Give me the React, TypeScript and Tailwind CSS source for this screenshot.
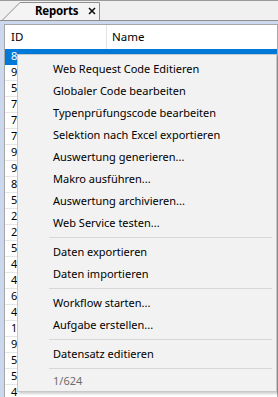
import React from "react";

const ids = ["8", "9", "5", "7", "7", "7", "9", "9", "8", "5", "2", "2", "5", "4", "4", "6", "4", "1", "9", "5", "5", "4"];

type MenuEntry = { label: string } | "sep";

const menu: MenuEntry[] = [
  { label: "Web Request Code Editieren" },
  { label: "Globaler Code bearbeiten" },
  { label: "Typenprüfungscode bearbeiten" },
  { label: "Selektion nach Excel exportieren" },
  { label: "Auswertung generieren..." },
  { label: "Makro ausführen..." },
  { label: "Auswertung archivieren..." },
  { label: "Web Service testen..." },
  "sep",
  { label: "Daten exportieren" },
  { label: "Daten importieren" },
  "sep",
  { label: "Workflow starten..." },
  { label: "Aufgabe erstellen..." },
  "sep",
  { label: "Datensatz editieren" },
  "sep",
];

function ReportsTab() {
  return (
    <div className="relative h-[19px] w-[98px] ml-[2px]">
      <svg className="absolute inset-0" width="98" height="19" viewBox="0 0 98 19">
        <path d="M0.5 19 L18 1.5 L97.5 1.5 L97.5 19" fill="#f4f4f4" stroke="#8e8e8e" strokeWidth="1" />
      </svg>
      <div className="relative flex items-center h-full pl-[33px] gap-[10px]">
        <span className="font-bold text-[11.5px] tracking-[-0.2px] text-black leading-none">Reports</span>
        <svg width="8" height="8" viewBox="0 0 8 8" className="mt-[1px]">
          <path d="M1 1 L7 7 M7 1 L1 7" stroke="#111" strokeWidth="1.6" />
        </svg>
      </div>
    </div>
  );
}

function ContextMenu() {
  return (
    <div className="absolute left-[17px] top-[54px] w-[260px] bg-[#f2f2f2] border border-[#c8c8c8] shadow-[2px_2px_2px_rgba(0,0,0,0.18)] pt-[3px]">
      {menu.map((m, i) =>
        m === "sep" ? (
          <div key={i} className="h-[7px] flex items-center pl-[31px] pr-[4px]">
            <div className="h-px w-full bg-[#d7d7d7]" />
          </div>
        ) : (
          <div key={i} className="h-[22px] flex items-center pl-[35px] text-[11px] text-black">
            {m.label}
          </div>
        )
      )}
      <div className="h-[19px] flex items-center pl-[35px] text-[11px] text-[#6d6d6d]">1/624</div>
    </div>
  );
}

export default function App() {
  return (
    <div className="relative w-[278px] h-[397px] overflow-hidden bg-[#f0f0f0] font-['Noto_Sans',sans-serif] text-[11px] flex flex-col">
      <div className="h-[20px] shrink-0 border-t border-[#9a9a9a] flex items-end">
        <ReportsTab />
      </div>
      <div className="flex-1 flex flex-col bg-[#cbd8ee] border-t border-[#8e8e8e] pt-[3px] pl-[4px]">
        <div className="flex-1 bg-white border-l border-t border-r border-[#a6a6a6] flex flex-col">
          <div className="h-[24px] shrink-0 flex items-center text-black text-[11.5px]">
            <div className="w-[102px] pl-[6px] h-full flex items-center border-r border-[#e3e3e3]">ID</div>
            <div className="pl-[5px]">Name</div>
          </div>
          {ids.map((id, i) => (
            <div
              key={i}
              className={`h-[16px] shrink-0 flex items-center pl-[6px] border-b ${
                i === 0 ? "bg-[#0078d7] text-white border-[#0078d7]" : "text-black border-[#e6e6e6]"
              }`}
            >
              {id}
            </div>
          ))}
        </div>
      </div>
      <ContextMenu />
    </div>
  );
}
